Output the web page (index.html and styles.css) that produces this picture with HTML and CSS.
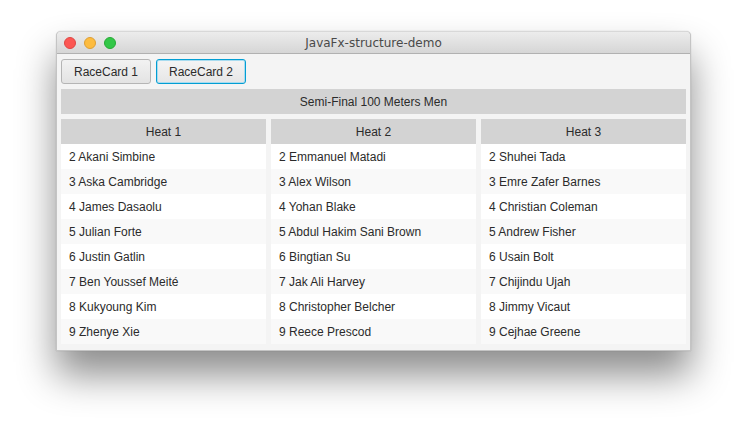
FILE: index.html
```html
<!DOCTYPE html>
<html>
<head>
<meta charset="utf-8">
<link rel="stylesheet" href="styles.css">
</head>
<body>
<div class="window">
  <div class="titlebar">
    <div class="lights">
      <span class="light red"></span>
      <span class="light yellow"></span>
      <span class="light green"></span>
    </div>
    <div class="title">JavaFx-structure-demo</div>
  </div>
  <div class="content">
    <div class="toolbar">
      <button class="btn">RaceCard 1</button>
      <button class="btn focused">RaceCard 2</button>
    </div>
    <div class="race-header">Semi-Final 100 Meters Men</div>
    <div class="heats">
      <div class="heat">
        <div class="heat-header">Heat 1</div>
        <div class="row">2 Akani Simbine</div>
        <div class="row">3 Aska Cambridge</div>
        <div class="row">4 James Dasaolu</div>
        <div class="row">5 Julian Forte</div>
        <div class="row">6 Justin Gatlin</div>
        <div class="row">7 Ben Youssef Meité</div>
        <div class="row">8 Kukyoung Kim</div>
        <div class="row">9 Zhenye Xie</div>
      </div>
      <div class="heat">
        <div class="heat-header">Heat 2</div>
        <div class="row">2 Emmanuel Matadi</div>
        <div class="row">3 Alex Wilson</div>
        <div class="row">4 Yohan Blake</div>
        <div class="row">5 Abdul Hakim Sani Brown</div>
        <div class="row">6 Bingtian Su</div>
        <div class="row">7 Jak Ali Harvey</div>
        <div class="row">8 Christopher Belcher</div>
        <div class="row">9 Reece Prescod</div>
      </div>
      <div class="heat">
        <div class="heat-header">Heat 3</div>
        <div class="row">2 Shuhei Tada</div>
        <div class="row">3 Emre Zafer Barnes</div>
        <div class="row">4 Christian Coleman</div>
        <div class="row">5 Andrew Fisher</div>
        <div class="row">6 Usain Bolt</div>
        <div class="row">7 Chijindu Ujah</div>
        <div class="row">8 Jimmy Vicaut</div>
        <div class="row">9 Cejhae Greene</div>
      </div>
    </div>
  </div>
</div>
</body>
</html>
```

FILE: styles.css
```css
html, body {
  margin: 0;
  padding: 0;
  background: #ffffff;
}
body {
  box-sizing: border-box;
  min-height: 431px;
  font-family: "Liberation Sans", Arial, sans-serif;
  font-size: 12px;
  color: #2b2b2b;
  padding: 31px 0 0 56px;
}
.window {
  box-sizing: border-box;
  width: 635px;
  height: 320px;
  background: #f4f4f4;
  border: 1px solid #c4c4c4;
  border-top-color: #d8d8d8;
  border-radius: 5px 5px 0 0;
  box-shadow: 0 24px 38px rgba(0, 0, 0, 0.45), 0 0 1px rgba(0,0,0,0.3);
  display: flex;
  flex-direction: column;
}
.titlebar {
  height: 21px;
  border-bottom: 1px solid #b1b1b1;
  background: linear-gradient(#ececec, #d6d6d6);
  border-radius: 4px 4px 0 0;
  display: flex;
  align-items: center;
  position: relative;
}
.lights {
  display: flex;
  gap: 8px;
  padding-left: 7px;
}
.light {
  width: 12px;
  height: 12px;
  border-radius: 50%;
  box-sizing: border-box;
}
.red { background: #fc5753; border: 1px solid #df4744; }
.yellow { background: #fdbc40; border: 1px solid #de9f34; }
.green { background: #33c748; border: 1px solid #27aa35; }
.title {
  position: absolute;
  left: 0;
  right: 0;
  top: 0;
  bottom: 0;
  display: flex;
  align-items: center;
  justify-content: center;
  font-family: "DejaVu Sans", "Liberation Sans", sans-serif;
  font-size: 12px;
  color: #4a4a4a;
  pointer-events: none;
}
.content {
  padding: 5px 4px 0 4px;
  display: flex;
  flex-direction: column;
}
.toolbar {
  display: flex;
  gap: 5px;
  height: 25px;
}
.btn {
  box-sizing: border-box;
  width: 90px;
  height: 25px;
  font-family: "Liberation Sans", Arial, sans-serif;
  font-size: 12px;
  color: #2b2b2b;
  background: linear-gradient(#f2f2f2, #e3e3e3);
  border: 1px solid #b5b5b5;
  border-radius: 3px;
  padding: 0;
  margin: 0;
}
.btn.focused {
  border: 1px solid #039ed3;
  box-shadow: inset 0 0 0 1px #a8dcf0;
  background: linear-gradient(#f4f4f4, #e6e6e6);
}
.race-header {
  margin-top: 5px;
  height: 25px;
  background: #d3d3d3;
  display: flex;
  align-items: center;
  justify-content: center;
}
.heats {
  margin-top: 5px;
  display: grid;
  grid-template-columns: repeat(3, 205px);
  gap: 5px;
}
.heat {
  display: flex;
  flex-direction: column;
}
.heat-header {
  height: 25px;
  background: #d3d3d3;
  display: flex;
  align-items: center;
  justify-content: center;
}
.row {
  box-sizing: border-box;
  height: 25px;
  line-height: 25px;
  padding: 1px 0 0 8px;
  background: #ffffff;
}
.row:nth-child(odd) {
  background: #f9f9f9;
}
```
